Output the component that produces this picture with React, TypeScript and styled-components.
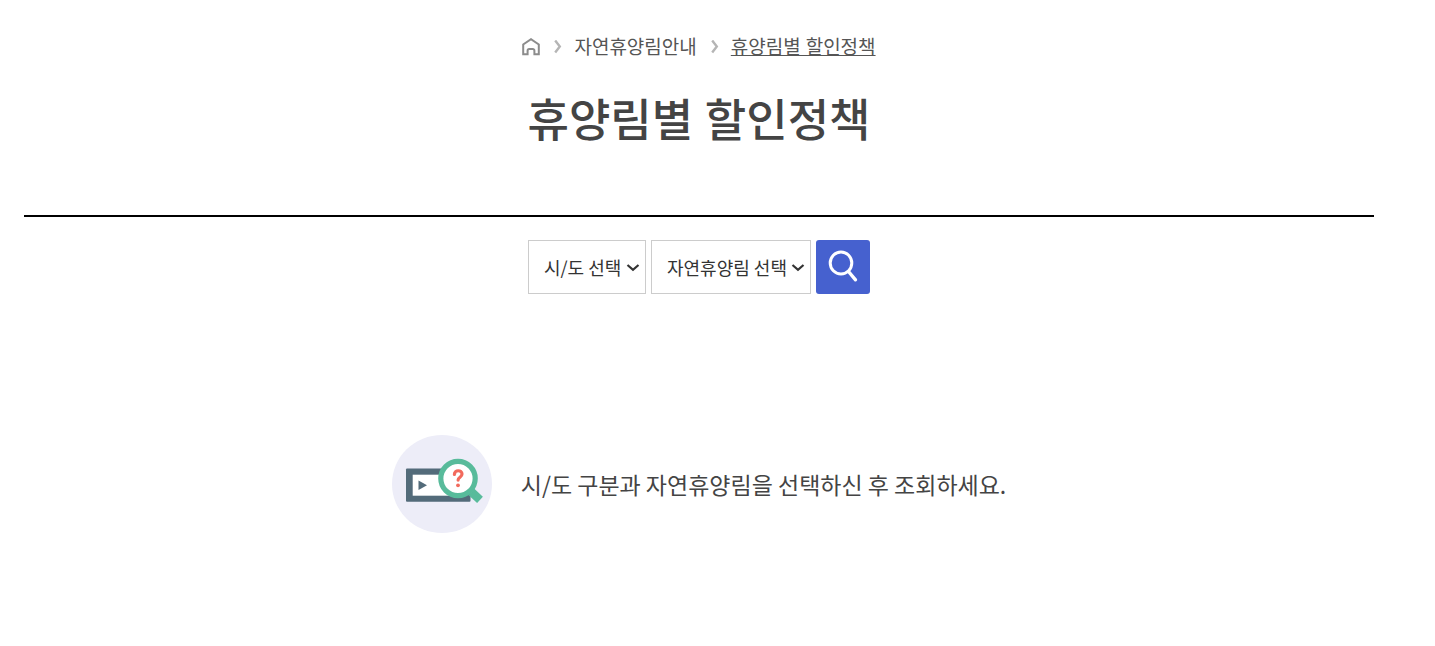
import React from "react";
import styled, { createGlobalStyle } from "styled-components";

const GlobalStyle = createGlobalStyle`
  *, *::before, *::after { box-sizing: border-box; }
  body {
    margin: 0;
    background: #fff;
    color: #444;
    font-family: "Noto Sans", "Noto Sans CJK KR", sans-serif;
  }
`;

const Page = styled.main`
  padding: 33px 61px 48px 24px;
`;

const PageHeader = styled.header`
  display: flex;
  flex-direction: column;
  align-items: center;
  padding-bottom: 62px;
  border-bottom: 2px solid #000;
`;

const Breadcrumb = styled.ol`
  display: flex;
  align-items: center;
  gap: 14px;
  margin: 0;
  padding: 0;
  list-style: none;
  font-size: 19px;
  line-height: 28px;
`;

const Crumb = styled.li`
  display: flex;
  align-items: center;
  gap: 12px;
`;

const CrumbLink = styled.a<{ $current?: boolean }>`
  display: block;
  color: #555;
  text-decoration: ${(p) => (p.$current ? "underline" : "none")};
  text-decoration-thickness: 1px;

  svg { display: block; }
`;

const Title = styled.h1`
  margin: 25px 0 0;
  font-size: 45px;
  font-weight: 500;
  line-height: 67px;
`;

const SearchForm = styled.form`
  display: flex;
  justify-content: center;
  gap: 5px;
  margin-top: 23px;
`;

const SelectBox = styled.div<{ $width: number }>`
  position: relative;
  width: ${(p) => p.$width}px;

  svg {
    position: absolute;
    top: 22px;
    right: 6px;
    pointer-events: none;
  }
`;

const Select = styled.select`
  appearance: none;
  display: block;
  width: 100%;
  height: 54px;
  padding: 0 0 0 15px;
  border: 1px solid #ccc;
  border-radius: 0;
  background: #fff;
  color: #333;
  font-family: "Noto Sans CJK KR", sans-serif;
  font-size: 18px;
`;

const SearchButton = styled.button`
  display: flex;
  align-items: center;
  justify-content: center;
  width: 54px;
  height: 54px;
  padding: 0;
  border: 0;
  border-radius: 3px;
  background: #4661cf;
  cursor: pointer;
`;

const EmptyState = styled.section`
  display: flex;
  align-items: center;
  justify-content: center;
  gap: 29px;
  margin-top: 141px;
`;

const Message = styled.p`
  margin: 0;
  font-family: "Noto Sans CJK KR", sans-serif;
  font-size: 23px;
  line-height: 35px;
`;

const HomeIcon = () => (
  <svg width="18" height="18" viewBox="0 0 18 18" fill="none" stroke="#8c8c8c" strokeWidth="2">
    <path d="M1.200 16.300V6.500L9 1.200 16.800 6.500v9.800h-4.400v-3.600a1.600 1.600 0 0 0-1.600-1.600H7.200a1.600 1.600 0 0 0-1.600 1.600v3.600Z" />
  </svg>
);

const Chevron = () => (
  <svg width="8" height="14" viewBox="0 0 8 14" fill="none" stroke="#b5b5b5" strokeWidth="2.400" aria-hidden="true">
    <path d="M1.200 .5 5.800 6.500l-4.600 6" />
  </svg>
);

const SelectArrow = () => (
  <svg width="14" height="10" viewBox="0 0 14 10" fill="none" stroke="#333" strokeWidth="2.200" aria-hidden="true">
    <path d="M1.500 3 7 7.800 12.500 3" />
  </svg>
);

const SearchIcon = () => (
  <svg width="30" height="34" viewBox="0 0 30 34" fill="none" stroke="#fff" aria-hidden="true">
    <ellipse cx="13" cy="13" rx="10.800" ry="11" strokeWidth="3" />
    <path d="M20.500 21.500 27.500 29.800" strokeWidth="3.400" strokeLinecap="round" />
  </svg>
);

const EmptyIllustration = () => (
  <svg width="100" height="98" viewBox="0 0 100 98" aria-hidden="true">
    <ellipse cx="50" cy="49" rx="50" ry="49" fill="#ededf8" />
    <rect x="14" y="33.600" width="64.500" height="33.200" rx="1" fill="#536b7a" />
    <rect x="20.700" y="39.700" width="51" height="21" fill="#fff" />
    <path d="M26.500 45.500v9.500l8.500-4.700Z" fill="#536b7a" />
    <path d="M79.500 57 88 64.800" stroke="#58bb9b" strokeWidth="8.500" />
    <circle cx="66" cy="43.500" r="17.200" fill="#fff" stroke="#58bb9b" strokeWidth="5.200" />
    <path d="M62.400 39.500c0-5 7.600-4.800 7.600-.4 0 3.200-3.900 3.100-3.900 6" fill="none" stroke="#f26a5d" strokeWidth="3.200" strokeLinecap="round" />
    <circle cx="66" cy="50.300" r="1.900" fill="#f26a5d" />
  </svg>
);

export default function App() {
  return (
    <>
      <GlobalStyle />
      <Page>
        <PageHeader>
          <nav aria-label="breadcrumb">
            <Breadcrumb>
              <Crumb>
                <CrumbLink href="#" aria-label="홈">
                  <HomeIcon />
                </CrumbLink>
              </Crumb>
              <Crumb>
                <Chevron />
                <CrumbLink href="#">자연휴양림안내</CrumbLink>
              </Crumb>
              <Crumb>
                <Chevron />
                <CrumbLink href="#" $current aria-current="page">
                  휴양림별 할인정책
                </CrumbLink>
              </Crumb>
            </Breadcrumb>
          </nav>
          <Title>휴양림별 할인정책</Title>
        </PageHeader>
        <SearchForm onSubmit={(e) => e.preventDefault()}>
          <SelectBox $width={118}>
            <Select aria-label="시/도" defaultValue="">
              <option value="">시/도 선택</option>
            </Select>
            <SelectArrow />
          </SelectBox>
          <SelectBox $width={160}>
            <Select aria-label="자연휴양림" defaultValue="">
              <option value="">자연휴양림 선택</option>
            </Select>
            <SelectArrow />
          </SelectBox>
          <SearchButton type="submit" aria-label="조회">
            <SearchIcon />
          </SearchButton>
        </SearchForm>
        <EmptyState>
          <EmptyIllustration />
          <Message>시/도 구분과 자연휴양림을 선택하신 후 조회하세요.</Message>
        </EmptyState>
      </Page>
    </>
  );
}
